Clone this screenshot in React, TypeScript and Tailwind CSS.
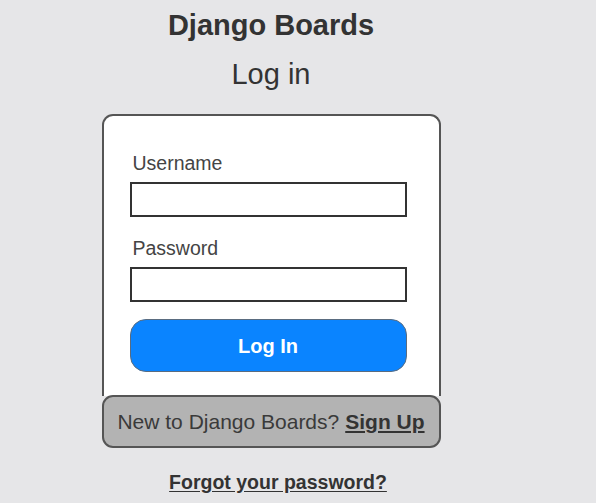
import React from 'react';

export default function App() {
  return (
    <div className="min-h-[503px] w-full bg-[#e6e6e8] font-['Liberation_Sans',Arial,sans-serif]">
      <div className="flex w-[542px] flex-col items-center pt-[9px]">
        <h1 className="text-[29px] font-bold leading-[32px] text-[#333]">Django Boards</h1>
        <h2 className="mt-[17px] text-[29px] leading-[32px] text-[#333]">Log in</h2>

        <div className="mt-[24px] w-[339px]">
          <div className="rounded-t-[11px] border-2 border-b-0 border-[#555] bg-white pb-[24px] pl-[26px] pt-[36px]">
            <label className="block pl-[3px] text-[19.5px] leading-[22px] text-[#444]">Username</label>
            <input className="mt-[8px] block h-[35px] w-[277px] border-2 border-[#333] bg-white" type="text" />
            <label className="mt-[20px] block pl-[3px] text-[19.5px] leading-[22px] text-[#444]">Password</label>
            <input className="mt-[8px] block h-[35px] w-[277px] border-2 border-[#333] bg-white" type="password" />
            <button className="mt-[17px] flex h-[53px] w-[277px] items-center justify-center rounded-[16px] border border-[#5a6c80] bg-[#0a84ff] text-[20px] font-bold text-white">
              Log In
            </button>
          </div>
          <div className="-mt-px flex h-[53px] items-center justify-center rounded-[11px] border-2 border-[#555] bg-[#b3b3b3] text-[21px] text-[#3a3a3a]">
            <span>New to Django Boards?</span>
            <a className="ml-[6px] font-bold text-[#333] underline underline-offset-2" href="#">Sign Up</a>
          </div>
        </div>

        <a className="ml-[14px] mt-[20px] text-[19.5px] font-bold text-[#333] underline underline-offset-2" href="#">
          Forgot your password?
        </a>
      </div>
    </div>
  );
}
